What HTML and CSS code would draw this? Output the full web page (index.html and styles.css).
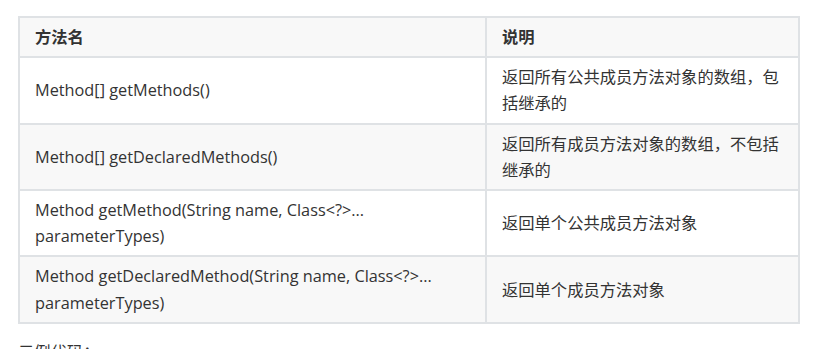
FILE: index.html
```html
<!DOCTYPE html>
<html lang="zh-CN">
<head>
<meta charset="utf-8">
<link rel="stylesheet" href="styles.css">
</head>
<body>
<div class="page">
  <table class="methods">
    <colgroup>
      <col class="c1">
      <col class="c2">
    </colgroup>
    <thead>
      <tr><th>方法名</th><th>说明</th></tr>
    </thead>
    <tbody>
      <tr><td>Method[] getMethods()</td><td>返回所有公共成员方法对象的数组，包括继承的</td></tr>
      <tr><td>Method[] getDeclaredMethods()</td><td>返回所有成员方法对象的数组，不包括继承的</td></tr>
      <tr><td>Method getMethod(String name, Class&lt;?&gt;... parameterTypes)</td><td>返回单个公共成员方法对象</td></tr>
      <tr><td>Method getDeclaredMethod(String name, Class&lt;?&gt;... parameterTypes)</td><td>返回单个成员方法对象</td></tr>
    </tbody>
  </table>
  <p class="after">示例代码：</p>
</div>
</body>
</html>
```

FILE: styles.css
```css
html, body {
  margin: 0;
  padding: 0;
  background: #ffffff;
}
.page {
  padding: 16px 18px 0 18px;
  font-family: "Open Sans", "Noto Sans CJK SC", sans-serif;
  font-size: 16.3px;
  line-height: 26.2px;
  color: #333333;
}
.methods {
  border-collapse: collapse;
  table-layout: fixed;
  width: 780px;
}
.c1 { width: 467px; }
.c2 { width: 313px; }
.methods th,
.methods td {
  border: 2px solid #dfe2e5;
  padding: 6px 13px 6px 15px;
  text-align: left;
  vertical-align: middle;
}
.methods th {
  font-weight: bold;
  background: #f8f8f8;
}
.methods tbody tr:nth-child(even) td {
  background: #f8f8f8;
}
.after {
  margin: 15px 0 0 0;
  color: #333333;
}
```
